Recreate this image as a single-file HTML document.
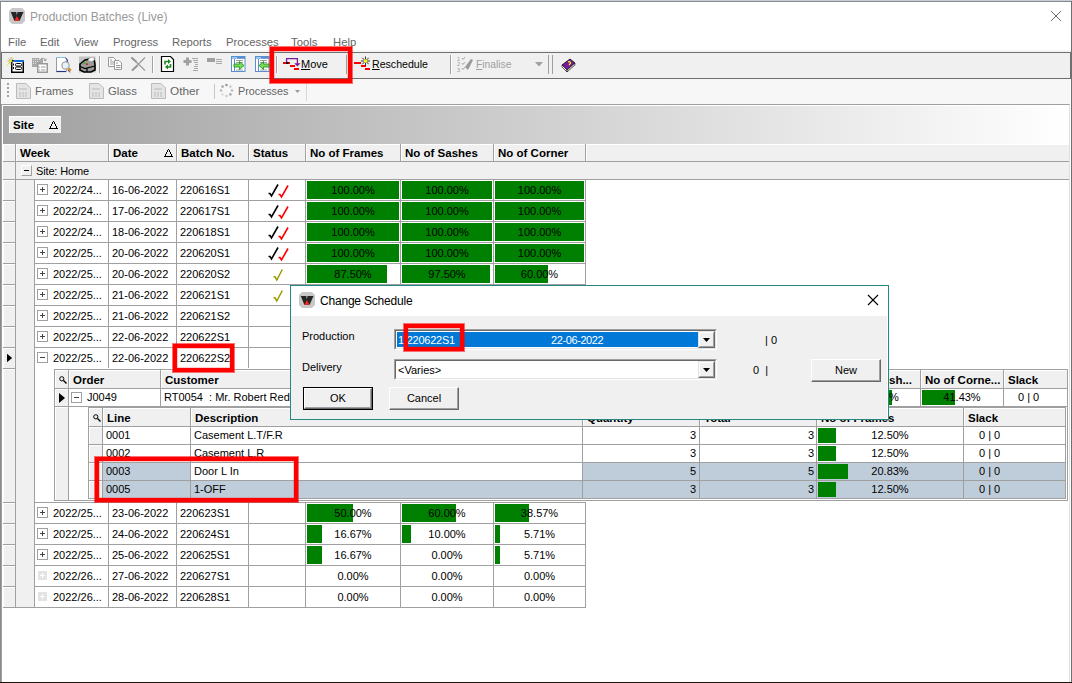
<!DOCTYPE html><html><head><meta charset="utf-8"><style>
*{margin:0;padding:0;box-sizing:border-box}
html,body{width:1072px;height:683px;overflow:hidden;background:#fff;font-family:"Liberation Sans",sans-serif;}
body{position:relative}
div{position:absolute}
.t{white-space:nowrap;font-size:11px;line-height:13px;color:#000}
.h{font-weight:bold;font-size:11.5px}
svg{position:absolute;overflow:visible}
</style></head><body>
<div style="left:0px;top:0px;width:1072px;height:1px;background:#c8ced8"></div>
<div style="left:0px;top:1px;width:1072px;height:1px;background:#8a8a8a"></div>
<div style="left:0px;top:1px;width:1px;height:682px;background:#8a8a8a"></div>
<div style="left:1071px;top:1px;width:1px;height:682px;background:#707070"></div>
<div style="left:0px;top:682px;width:1072px;height:1px;background:#1c140c"></div>
<svg style="left:9px;top:8px" width="16" height="16" viewBox="0 0 16 16"><path d="M3 0H13L16 3V13L13 16H3L0 13V3Z" fill="#c8c8c8"/><path d="M1.8 4H7.3L7.9 7.5L8.5 4H14.6L14 5L10.7 12.7H5.3Z" fill="#262626"/><path d="M7.9 8L10.5 12.8H5.5Z" fill="#f22"/></svg>
<div class="t" style="left:30px;top:10px;font-size:12px;line-height:15px;color:#999">Production Batches (Live)</div>
<svg style="left:1050px;top:10px" width="12" height="12" viewBox="0 0 12 12"><path d="M1 1L11 11M11 1L1 11" stroke="#6a6a6a" stroke-width="1"/></svg>
<div class="t" style="left:8px;top:35px;font-size:11.3px;line-height:15px;color:#666">File</div>
<div class="t" style="left:40px;top:35px;font-size:11.3px;line-height:15px;color:#666">Edit</div>
<div class="t" style="left:74px;top:35px;font-size:11.3px;line-height:15px;color:#666">View</div>
<div class="t" style="left:113px;top:35px;font-size:11.3px;line-height:15px;color:#666">Progress</div>
<div class="t" style="left:172px;top:35px;font-size:11.3px;line-height:15px;color:#666">Reports</div>
<div class="t" style="left:226px;top:35px;font-size:11.3px;line-height:15px;color:#666">Processes</div>
<div class="t" style="left:291px;top:35px;font-size:11.3px;line-height:15px;color:#666">Tools</div>
<div class="t" style="left:333px;top:35px;font-size:11.3px;line-height:15px;color:#666">Help</div>
<div style="left:1px;top:50px;width:1070px;height:2px;background:#f4f4f4"></div>
<div style="left:1px;top:52px;width:1070px;height:27px;background:#f0f0f0;border:1px solid #6e6e6e"></div>
<div style="left:1px;top:79px;width:1069px;height:25px;background:#f7f7f7"></div>
<svg style="left:7px;top:56px" width="17" height="17" viewBox="0 0 17 17"><rect x="4.75" y="4.75" width="11.5" height="11.5" fill="#fff" stroke="#000" stroke-width="1.5"/><rect x="7" y="4" width="10" height="2" fill="#0a6ad8"/><rect x="8.5" y="7.5" width="6" height="2.5" rx="1" fill="none" stroke="#000" stroke-width="1"/><rect x="8.5" y="11" width="6" height="2.5" rx="1" fill="none" stroke="#000" stroke-width="1"/><path d="M6.5 7.5V9.5M6.5 11V13" stroke="#000" stroke-width="1"/><path d="M4 1V9M0.5 5H8M1.5 2.5L6.5 7.5M6.5 2.5L1.5 7.5" stroke="#888" stroke-width="0.6"/><circle cx="4" cy="5" r="1" fill="#ff0"/><circle cx="1.5" cy="4.5" r="0.8" fill="#ee0"/><circle cx="2" cy="7" r="0.8" fill="#ee0"/><circle cx="5" cy="2" r="0.8" fill="#ee0"/><circle cx="0.7" cy="9" r="0.7" fill="#ee0"/></svg>
<svg style="left:31px;top:56px" width="17" height="17" viewBox="0 0 17 17"><path d="M1 2H8L9 3H12V11H1Z" fill="#a8a8a8"/><path d="M2 3.5H9M2 5.5H8M2 7.5H7" stroke="#e8e8e8" stroke-width="0.9" stroke-dasharray="1 1"/><path d="M10 2.5Q13 1.5 14.5 4M13 4.5H15V2.5" stroke="#999" fill="none" stroke-width="1"/><rect x="6.75" y="7.75" width="9.5" height="8.5" fill="#fff" stroke="#999" stroke-width="1.5"/><path d="M8.5 10.5V11.5M8.5 13.5V14.5M10 11H14.5M10 14H14.5" stroke="#999" stroke-width="1.2"/></svg>
<svg style="left:56px;top:56px" width="16" height="17" viewBox="0 0 16 17"><path d="M0.5 1.5H9L10.5 3V15.5H0.5Z" fill="#fff" stroke="#9a9a9a"/><path d="M0.5 1.5H9" stroke="#8ac0e8"/><path d="M0.5 15.5H10" stroke="#223388" stroke-width="1.2"/><path d="M9.5 1.5L11.5 4L12 13" stroke="#2233aa" fill="none" stroke-width="0.9"/><circle cx="9.5" cy="9.5" r="3.6" fill="#e4f2fc" stroke="#a8a8a8" stroke-width="1.3"/><path d="M12.5 12.5L14.5 15" stroke="#e09020" stroke-width="3"/><path d="M12 14L14 16.5" stroke="#2233aa" stroke-width="0.8"/></svg>
<svg style="left:79px;top:56px" width="17" height="17" viewBox="0 0 17 17"><rect x="0" y="0.5" width="16.5" height="16" fill="#c4c4c4"/><path d="M1 8L6 4L11 3H15L16 8V14L12 16H5L1 14Z" fill="#9a9a9a" stroke="#000" stroke-width="1.6"/><path d="M1 10.5L6 12.5L16 10M8 12.5V16" stroke="#000" stroke-width="1.2" fill="none"/><path d="M9 4Q10.5 1 13 1.5Q16 1.5 15.5 4Q13 6 10 5Z" fill="#fff" stroke="#999" stroke-width="0.5"/><rect x="4.5" y="6.5" width="2" height="1.3" fill="#0c0"/><rect x="7" y="7.5" width="2" height="1.3" fill="#e00"/></svg>
<div style="left:99px;top:56px;width:1px;height:17px;background:#a0a0a0"></div><div style="left:100px;top:56px;width:1px;height:17px;background:#fff"></div>
<svg style="left:108px;top:57px" width="15" height="14" viewBox="0 0 15 14"><path d="M0.5 0.5H5.5L7.5 2.5V9.5H0.5Z" fill="#fff" stroke="#999"/><path d="M2 3H4M2 5H6M2 7H6" stroke="#999"/><path d="M6.5 3.5H11L13.5 6V12.5H6.5Z" fill="#fff" stroke="#999"/><path d="M8 6H10M8 8.5H12.5M8 10.5H12.5" stroke="#999"/></svg>
<svg style="left:131px;top:57px" width="15" height="14" viewBox="0 0 15 14"><path d="M0.5 0.5L14 13.5M14 0.5L1 13.5" stroke="#999" stroke-width="1.1"/><path d="M0.5 0.5L5.5 5M1 13.5L6.5 8.5" stroke="#999" stroke-width="2"/></svg>
<div style="left:152px;top:56px;width:1px;height:17px;background:#a0a0a0"></div><div style="left:153px;top:56px;width:1px;height:17px;background:#fff"></div>
<svg style="left:161px;top:56px" width="14" height="16" viewBox="0 0 14 16"><path d="M0.5 0.5H9.5L12.5 3.5V15.5H0.5Z" fill="#fff" stroke="#000" stroke-width="1.2"/><path d="M4 8.5V5.5H7.5" fill="none" stroke="#1a8a1a" stroke-width="1.6"/><path d="M7 3L10 5.5L7 8Z" fill="#1a8a1a"/><path d="M9.5 8V11H6.5" fill="none" stroke="#1a8a1a" stroke-width="1.6"/><path d="M7 8.5L4 11L7 13.5Z" fill="#1a8a1a"/></svg>
<svg style="left:183px;top:57px" width="16" height="15" viewBox="0 0 16 15"><path d="M3 0.5H6V3H8.5V6H6V8.5H3V6H0.5V3H3Z" fill="#a0a0a0"/><path d="M9 1.5H15M10 3.5H15M11 5.5H15M12 7.5H15M11 9.5H15M11 11.5H15M10 13.5H15" stroke="#a8a8a8" stroke-width="1"/></svg>
<svg style="left:207px;top:57px" width="16" height="10" viewBox="0 0 16 10"><rect x="0" y="1" width="8" height="4" fill="#a0a0a0"/><path d="M9 2.5H15M9 4.5H15M9 6.5H15" stroke="#a8a8a8" stroke-width="1"/></svg>
<svg style="left:231px;top:56px" width="16" height="16" viewBox="0 0 16 16"><rect x="0.5" y="0.5" width="13.5" height="15" fill="#fff" stroke="#5a8ed0"/><rect x="1" y="1" width="13" height="1.8" fill="#5a8ed0"/><rect x="1" y="1" width="5" height="1.8" fill="#9ccaf0"/><path d="M3.5 3V15.5" stroke="#5a8ed0"/><path d="M5 4.5H12M5 6.5H12M5 8.5H12M5 14H12" stroke="#888" stroke-width="0.8"/><path d="M3 8H8.5V5.5L13 9.5L8.5 13.5V11H3Z" fill="#7ad85a" stroke="#1e9a1e" stroke-width="0.9"/></svg>
<svg style="left:255px;top:56px" width="16" height="16" viewBox="0 0 16 16"><rect x="0.5" y="0.5" width="13.5" height="15" fill="#fff" stroke="#5a8ed0"/><rect x="1" y="1" width="13" height="1.8" fill="#5a8ed0"/><rect x="1" y="1" width="5" height="1.8" fill="#9ccaf0"/><path d="M3.5 3V15.5" stroke="#5a8ed0"/><path d="M5 4.5H12M5 6.5H12M5 8.5H12M5 14H12" stroke="#888" stroke-width="0.8"/><path d="M14 8H8.5V5.5L4 9.5L8.5 13.5V11H14Z" fill="#7ad85a" stroke="#1e9a1e" stroke-width="0.9"/></svg>
<div style="left:276px;top:56px;width:1px;height:17px;background:#a0a0a0"></div><div style="left:277px;top:56px;width:1px;height:17px;background:#fff"></div>
<svg style="left:283px;top:56px" width="18" height="16" viewBox="0 0 18 16"><rect x="0" y="6" width="7" height="2" fill="#f00"/><rect x="3" y="6" width="2.5" height="2" fill="#000"/><path d="M3.6 6.5V2.6H14.4V8" fill="none" stroke="#7a1a9a" stroke-width="1.3"/><path d="M11.3 7.2H17.5L14.4 10.6Z" fill="#7a1a9a"/><rect x="7" y="9" width="5" height="2" fill="#f00"/><rect x="11" y="12" width="5" height="2" fill="#f00"/></svg>
<div class="t" style="left:301px;top:57px;font-size:11px;line-height:15px;color:#000"><u>M</u>ove</div>
<div style="left:346px;top:55px;width:1px;height:19px;background:#a0a0a0"></div><div style="left:347px;top:55px;width:1px;height:19px;background:#fff"></div>
<svg style="left:354px;top:56px" width="18" height="16" viewBox="0 0 18 16"><rect x="0" y="6" width="7" height="2" fill="#f00"/><rect x="7" y="9" width="5" height="2" fill="#f00"/><rect x="11" y="12" width="5" height="2" fill="#f00"/><path d="M11.5 0.5V9.5M7 5H16M8.3 1.8L14.7 8.2M14.7 1.8L8.3 8.2" stroke="#000" stroke-width="0.8"/><circle cx="11.5" cy="5" r="1.7" fill="#ff0"/></svg>
<div class="t" style="left:372px;top:57px;font-size:10.6px;line-height:15px;color:#000"><u>R</u>eschedule</div>
<div style="left:450px;top:55px;width:1px;height:19px;background:#a0a0a0"></div><div style="left:451px;top:55px;width:1px;height:19px;background:#fff"></div>
<svg style="left:457px;top:56px" width="18" height="16" viewBox="0 0 18 16"><text x="0" y="5" font-size="5.5" fill="#999" font-family="Liberation Sans">1</text><text x="0" y="10" font-size="5.5" fill="#999" font-family="Liberation Sans">2</text><text x="0" y="15.5" font-size="5.5" fill="#999" font-family="Liberation Sans">3</text><path d="M5 2L6 3.5L8 1M5 7L6 8.5L8 6M5 12L6 13.5L8 11" stroke="#999" fill="none" stroke-width="0.8"/><path d="M8 11L14 3L16 4L11 14Z" fill="#999"/></svg>
<div class="t" style="left:476px;top:57px;font-size:10.3px;line-height:15px;color:#a0a0a0"><u>F</u>inalise</div>
<svg style="left:535px;top:62px" width="8" height="5" viewBox="0 0 8 5"><path d="M0 0H8L4 4.5Z" fill="#a0a0a0"/></svg>
<div style="left:548px;top:55px;width:1px;height:19px;background:#a0a0a0"></div>
<div style="left:552px;top:55px;width:1px;height:19px;background:#a0a0a0"></div>
<svg style="left:561px;top:58px" width="15" height="14" viewBox="0 0 15 14"><path d="M1 7L9 1L14 5L6 12Z" fill="#7a1a9a" stroke="#000" stroke-width="0.8"/><path d="M1 7L6 12V14L1 9Z" fill="#fff" stroke="#000" stroke-width="0.6"/><path d="M6 12L14 5V7L6 14Z" fill="#ddd" stroke="#000" stroke-width="0.6"/><path d="M7 4Q9 3 9.5 5Q9 6 8 7" stroke="#ff0" fill="none" stroke-width="1.2"/></svg>
<div style="left:7px;top:83px;width:2px;height:2px;background:#a0a0a0"></div>
<div style="left:7px;top:87px;width:2px;height:2px;background:#a0a0a0"></div>
<div style="left:7px;top:91px;width:2px;height:2px;background:#a0a0a0"></div>
<div style="left:7px;top:95px;width:2px;height:2px;background:#a0a0a0"></div>
<svg style="left:16px;top:83px" width="15" height="16" viewBox="0 0 15 16"><path d="M0.5 0.5H10L14.5 5V15.5H0.5Z" fill="#e4e4e4" stroke="#bbb"/><path d="M3 6H11M4 9V14M7 9V14M10 9V14" stroke="#c8c8c8" stroke-width="1.4"/></svg>
<div class="t" style="left:35px;top:84px;font-size:11.3px;line-height:15px;color:#666">Frames</div>
<svg style="left:89px;top:83px" width="15" height="16" viewBox="0 0 15 16"><path d="M0.5 0.5H10L14.5 5V15.5H0.5Z" fill="#e4e4e4" stroke="#bbb"/><path d="M3 6H11M4 9V14M7 9V14M10 9V14" stroke="#c8c8c8" stroke-width="1.4"/></svg>
<div class="t" style="left:108px;top:84px;font-size:11.3px;line-height:15px;color:#666">Glass</div>
<svg style="left:151px;top:83px" width="15" height="16" viewBox="0 0 15 16"><path d="M0.5 0.5H10L14.5 5V15.5H0.5Z" fill="#e4e4e4" stroke="#bbb"/><path d="M3 6H11M4 9V14M7 9V14M10 9V14" stroke="#c8c8c8" stroke-width="1.4"/></svg>
<div class="t" style="left:170px;top:84px;font-size:11.8px;line-height:15px;color:#666">Other</div>
<div style="left:214px;top:84px;width:1px;height:15px;background:#c8c8c8"></div>
<svg style="left:219px;top:83px" width="15" height="15" viewBox="0 0 15 15"><circle cx="13.0" cy="7.5" r="1.3" fill="#bbb"/><circle cx="11.390635480419599" cy="11.387538496079513" r="1.3" fill="#aaa"/><circle cx="7.504379796909033" cy="12.99999825612509" r="1.3" fill="#ccc"/><circle cx="3.6155609534899713" cy="11.393729997566377" r="1.3" fill="#ddd"/><circle cx="2.0000069754985326" cy="7.508759591040677" r="1.3" fill="#bbb"/><circle cx="3.6031779544424998" cy="3.618662866323378" r="1.3" fill="#aaa"/><circle cx="7.486860620382451" cy="2.0000156948675514" r="1.3" fill="#999"/><circle cx="11.378232759546325" cy="3.6000883775678076" r="1.3" fill="#ccc"/></svg>
<div class="t" style="left:238px;top:84px;font-size:10.8px;line-height:15px;color:#666">Processes</div>
<svg style="left:295px;top:90px" width="5" height="3" viewBox="0 0 5 3"><path d="M0 0H5L2.5 3Z" fill="#999"/></svg>
<div style="left:306px;top:82px;width:1px;height:19px;background:#d8d8d8"></div>
<div style="left:1px;top:104px;width:1069px;height:578px;background:#fff;border:1px solid #a0a0a0;border-right-color:#e0e0e0;border-bottom:none"></div>
<div style="left:2px;top:105px;width:1067px;height:577px;border-left:1px solid #fff;border-top:1px solid #fff"></div>
<div style="left:3px;top:106px;width:1066px;height:38px;background:linear-gradient(to right,#a0a0a0,#ffffff)"></div>
<div style="left:9px;top:116px;width:52px;height:17px;background:#f0f0f0;border-left:1px solid #fff;border-top:1px solid #fff"></div>
<div class="t" style="left:13px;top:119px;font-weight:bold;font-size:11.5px">Site</div>
<svg style="left:49px;top:121px" width="9" height="8" viewBox="0 0 9 8" shape-rendering="crispEdges" fill="#000"><rect x="4" y="0" width="1" height="1"/><rect x="3" y="1" width="1" height="2"/><rect x="5" y="1" width="1" height="2"/><rect x="2" y="3" width="1" height="2"/><rect x="6" y="3" width="1" height="2"/><rect x="1" y="5" width="1" height="2"/><rect x="7" y="5" width="1" height="2"/><rect x="0" y="7" width="9" height="1"/></svg>
<div style="left:3px;top:144px;width:1066px;height:18px;background:#f0f0f0"></div>
<div style="left:3px;top:144px;width:1066px;height:1px;background:#fff"></div>
<div style="left:3px;top:161px;width:1066px;height:1px;background:#a0a0a0"></div>
<div style="left:15px;top:144px;width:1px;height:17px;background:#a0a0a0"></div>
<div style="left:16px;top:145px;width:1px;height:16px;background:#fff"></div>
<div style="left:108px;top:144px;width:1px;height:17px;background:#a0a0a0"></div>
<div style="left:109px;top:145px;width:1px;height:16px;background:#fff"></div>
<div style="left:176px;top:144px;width:1px;height:17px;background:#a0a0a0"></div>
<div style="left:177px;top:145px;width:1px;height:16px;background:#fff"></div>
<div style="left:248px;top:144px;width:1px;height:17px;background:#a0a0a0"></div>
<div style="left:249px;top:145px;width:1px;height:16px;background:#fff"></div>
<div style="left:305px;top:144px;width:1px;height:17px;background:#a0a0a0"></div>
<div style="left:306px;top:145px;width:1px;height:16px;background:#fff"></div>
<div style="left:400px;top:144px;width:1px;height:17px;background:#a0a0a0"></div>
<div style="left:401px;top:145px;width:1px;height:16px;background:#fff"></div>
<div style="left:493px;top:144px;width:1px;height:17px;background:#a0a0a0"></div>
<div style="left:494px;top:145px;width:1px;height:16px;background:#fff"></div>
<div style="left:585px;top:144px;width:1px;height:17px;background:#a0a0a0"></div>
<div style="left:586px;top:145px;width:1px;height:16px;background:#fff"></div>
<div style="left:3px;top:144px;width:1px;height:17px;background:#fff"></div>
<div class="t" style="left:20px;top:147px;font-weight:bold;font-size:11.5px">Week</div>
<div class="t" style="left:113px;top:147px;font-weight:bold;font-size:11.5px">Date</div>
<div class="t" style="left:181px;top:147px;font-weight:bold;font-size:11.5px">Batch No.</div>
<div class="t" style="left:253px;top:147px;font-weight:bold;font-size:11.5px">Status</div>
<div class="t" style="left:310px;top:147px;font-weight:bold;font-size:11.5px">No of Frames</div>
<div class="t" style="left:405px;top:147px;font-weight:bold;font-size:11.5px">No of Sashes</div>
<div class="t" style="left:498px;top:147px;font-weight:bold;font-size:11.5px">No of Corner</div>
<svg style="left:164px;top:149px" width="9" height="8" viewBox="0 0 9 8" shape-rendering="crispEdges" fill="#000"><rect x="4" y="0" width="1" height="1"/><rect x="3" y="1" width="1" height="2"/><rect x="5" y="1" width="1" height="2"/><rect x="2" y="3" width="1" height="2"/><rect x="6" y="3" width="1" height="2"/><rect x="1" y="5" width="1" height="2"/><rect x="7" y="5" width="1" height="2"/><rect x="0" y="7" width="9" height="1"/></svg>
<div style="left:3px;top:162px;width:1066px;height:17px;background:#f0f0f0"></div>
<div style="left:3px;top:179px;width:1066px;height:1px;background:#a0a0a0"></div>
<div style="left:15px;top:162px;width:1px;height:446px;background:#a0a0a0"></div>
<div style="left:21px;top:165px;width:11px;height:11px;background:#f0f0f0;border-top:1px solid #fff;border-left:1px solid #fff;border-right:1px solid #a0a0a0;border-bottom:1px solid #a0a0a0"></div>
<div style="left:24px;top:170px;width:5px;height:1px;background:#000"></div>
<div class="t" style="left:36px;top:165px;letter-spacing:-0.15px">Site: Home</div>
<div style="left:16px;top:180px;width:18px;height:427px;background:#f0f0f0"></div>
<div style="left:34px;top:179px;width:1px;height:428px;background:#a0a0a0"></div>
<div style="left:3px;top:607px;width:31px;height:1px;background:#a0a0a0"></div>
<div style="left:3px;top:180px;width:12px;height:20px;background:#f0f0f0;border-left:1px solid #fff;border-top:1px solid #fff"></div><div style="left:3px;top:200px;width:12px;height:1px;background:#a0a0a0"></div><div style="left:37px;top:184px;width:11px;height:11px;border:1px solid #a0a0a0;background:#fff"></div><div style="left:40px;top:189px;width:5px;height:1px;background:#444"></div><div style="left:42px;top:187px;width:1px;height:5px;background:#444"></div><div class="t" style="left:53px;top:184px;">2022/24...</div><div class="t" style="left:112px;top:184px;">16-06-2022</div><div class="t" style="left:180px;top:184px;">220616S1</div><svg style="left:268px;top:184px" width="11" height="13" viewBox="0 0 11 13"><path d="M0.5 9.5H2L3.5 12L10 0.5" fill="none" stroke="#000" stroke-width="1.6" stroke-linejoin="miter"/></svg><svg style="left:278px;top:185px" width="11" height="13" viewBox="0 0 11 13"><path d="M0.5 9.5H2L3.5 12L10 0.5" fill="none" stroke="#f00" stroke-width="1.6" stroke-linejoin="miter"/></svg><div style="left:307px;top:181px;width:92px;height:18px;background:#008000"></div><div class="t" style="left:306px;top:184px;width:94px;text-align:center;">100.00%</div><div style="left:402px;top:181px;width:90px;height:18px;background:#008000"></div><div class="t" style="left:401px;top:184px;width:92px;text-align:center;">100.00%</div><div style="left:495px;top:181px;width:89px;height:18px;background:#008000"></div><div class="t" style="left:494px;top:184px;width:91px;text-align:center;">100.00%</div><div style="left:108px;top:179px;width:1px;height:21px;background:#a0a0a0"></div><div style="left:176px;top:179px;width:1px;height:21px;background:#a0a0a0"></div><div style="left:248px;top:179px;width:1px;height:21px;background:#a0a0a0"></div><div style="left:305px;top:179px;width:1px;height:21px;background:#a0a0a0"></div><div style="left:400px;top:179px;width:1px;height:21px;background:#a0a0a0"></div><div style="left:493px;top:179px;width:1px;height:21px;background:#a0a0a0"></div><div style="left:585px;top:179px;width:1px;height:21px;background:#a0a0a0"></div><div style="left:34px;top:200px;width:552px;height:1px;background:#a0a0a0"></div>
<div style="left:3px;top:201px;width:12px;height:20px;background:#f0f0f0;border-left:1px solid #fff;border-top:1px solid #fff"></div><div style="left:3px;top:221px;width:12px;height:1px;background:#a0a0a0"></div><div style="left:37px;top:205px;width:11px;height:11px;border:1px solid #a0a0a0;background:#fff"></div><div style="left:40px;top:210px;width:5px;height:1px;background:#444"></div><div style="left:42px;top:208px;width:1px;height:5px;background:#444"></div><div class="t" style="left:53px;top:205px;">2022/24...</div><div class="t" style="left:112px;top:205px;">17-06-2022</div><div class="t" style="left:180px;top:205px;">220617S1</div><svg style="left:268px;top:205px" width="11" height="13" viewBox="0 0 11 13"><path d="M0.5 9.5H2L3.5 12L10 0.5" fill="none" stroke="#000" stroke-width="1.6" stroke-linejoin="miter"/></svg><svg style="left:278px;top:206px" width="11" height="13" viewBox="0 0 11 13"><path d="M0.5 9.5H2L3.5 12L10 0.5" fill="none" stroke="#f00" stroke-width="1.6" stroke-linejoin="miter"/></svg><div style="left:307px;top:202px;width:92px;height:18px;background:#008000"></div><div class="t" style="left:306px;top:205px;width:94px;text-align:center;">100.00%</div><div style="left:402px;top:202px;width:90px;height:18px;background:#008000"></div><div class="t" style="left:401px;top:205px;width:92px;text-align:center;">100.00%</div><div style="left:495px;top:202px;width:89px;height:18px;background:#008000"></div><div class="t" style="left:494px;top:205px;width:91px;text-align:center;">100.00%</div><div style="left:108px;top:200px;width:1px;height:21px;background:#a0a0a0"></div><div style="left:176px;top:200px;width:1px;height:21px;background:#a0a0a0"></div><div style="left:248px;top:200px;width:1px;height:21px;background:#a0a0a0"></div><div style="left:305px;top:200px;width:1px;height:21px;background:#a0a0a0"></div><div style="left:400px;top:200px;width:1px;height:21px;background:#a0a0a0"></div><div style="left:493px;top:200px;width:1px;height:21px;background:#a0a0a0"></div><div style="left:585px;top:200px;width:1px;height:21px;background:#a0a0a0"></div><div style="left:34px;top:221px;width:552px;height:1px;background:#a0a0a0"></div>
<div style="left:3px;top:222px;width:12px;height:20px;background:#f0f0f0;border-left:1px solid #fff;border-top:1px solid #fff"></div><div style="left:3px;top:242px;width:12px;height:1px;background:#a0a0a0"></div><div style="left:37px;top:226px;width:11px;height:11px;border:1px solid #a0a0a0;background:#fff"></div><div style="left:40px;top:231px;width:5px;height:1px;background:#444"></div><div style="left:42px;top:229px;width:1px;height:5px;background:#444"></div><div class="t" style="left:53px;top:226px;">2022/24...</div><div class="t" style="left:112px;top:226px;">18-06-2022</div><div class="t" style="left:180px;top:226px;">220618S1</div><svg style="left:268px;top:226px" width="11" height="13" viewBox="0 0 11 13"><path d="M0.5 9.5H2L3.5 12L10 0.5" fill="none" stroke="#000" stroke-width="1.6" stroke-linejoin="miter"/></svg><svg style="left:278px;top:227px" width="11" height="13" viewBox="0 0 11 13"><path d="M0.5 9.5H2L3.5 12L10 0.5" fill="none" stroke="#f00" stroke-width="1.6" stroke-linejoin="miter"/></svg><div style="left:307px;top:223px;width:92px;height:18px;background:#008000"></div><div class="t" style="left:306px;top:226px;width:94px;text-align:center;">100.00%</div><div style="left:402px;top:223px;width:90px;height:18px;background:#008000"></div><div class="t" style="left:401px;top:226px;width:92px;text-align:center;">100.00%</div><div style="left:495px;top:223px;width:89px;height:18px;background:#008000"></div><div class="t" style="left:494px;top:226px;width:91px;text-align:center;">100.00%</div><div style="left:108px;top:221px;width:1px;height:21px;background:#a0a0a0"></div><div style="left:176px;top:221px;width:1px;height:21px;background:#a0a0a0"></div><div style="left:248px;top:221px;width:1px;height:21px;background:#a0a0a0"></div><div style="left:305px;top:221px;width:1px;height:21px;background:#a0a0a0"></div><div style="left:400px;top:221px;width:1px;height:21px;background:#a0a0a0"></div><div style="left:493px;top:221px;width:1px;height:21px;background:#a0a0a0"></div><div style="left:585px;top:221px;width:1px;height:21px;background:#a0a0a0"></div><div style="left:34px;top:242px;width:552px;height:1px;background:#a0a0a0"></div>
<div style="left:3px;top:243px;width:12px;height:20px;background:#f0f0f0;border-left:1px solid #fff;border-top:1px solid #fff"></div><div style="left:3px;top:263px;width:12px;height:1px;background:#a0a0a0"></div><div style="left:37px;top:247px;width:11px;height:11px;border:1px solid #a0a0a0;background:#fff"></div><div style="left:40px;top:252px;width:5px;height:1px;background:#444"></div><div style="left:42px;top:250px;width:1px;height:5px;background:#444"></div><div class="t" style="left:53px;top:247px;">2022/25...</div><div class="t" style="left:112px;top:247px;">20-06-2022</div><div class="t" style="left:180px;top:247px;">220620S1</div><svg style="left:268px;top:247px" width="11" height="13" viewBox="0 0 11 13"><path d="M0.5 9.5H2L3.5 12L10 0.5" fill="none" stroke="#000" stroke-width="1.6" stroke-linejoin="miter"/></svg><svg style="left:278px;top:248px" width="11" height="13" viewBox="0 0 11 13"><path d="M0.5 9.5H2L3.5 12L10 0.5" fill="none" stroke="#f00" stroke-width="1.6" stroke-linejoin="miter"/></svg><div style="left:307px;top:244px;width:92px;height:18px;background:#008000"></div><div class="t" style="left:306px;top:247px;width:94px;text-align:center;">100.00%</div><div style="left:402px;top:244px;width:90px;height:18px;background:#008000"></div><div class="t" style="left:401px;top:247px;width:92px;text-align:center;">100.00%</div><div style="left:495px;top:244px;width:89px;height:18px;background:#008000"></div><div class="t" style="left:494px;top:247px;width:91px;text-align:center;">100.00%</div><div style="left:108px;top:242px;width:1px;height:21px;background:#a0a0a0"></div><div style="left:176px;top:242px;width:1px;height:21px;background:#a0a0a0"></div><div style="left:248px;top:242px;width:1px;height:21px;background:#a0a0a0"></div><div style="left:305px;top:242px;width:1px;height:21px;background:#a0a0a0"></div><div style="left:400px;top:242px;width:1px;height:21px;background:#a0a0a0"></div><div style="left:493px;top:242px;width:1px;height:21px;background:#a0a0a0"></div><div style="left:585px;top:242px;width:1px;height:21px;background:#a0a0a0"></div><div style="left:34px;top:263px;width:552px;height:1px;background:#a0a0a0"></div>
<div style="left:3px;top:264px;width:12px;height:20px;background:#f0f0f0;border-left:1px solid #fff;border-top:1px solid #fff"></div><div style="left:3px;top:284px;width:12px;height:1px;background:#a0a0a0"></div><div style="left:37px;top:268px;width:11px;height:11px;border:1px solid #a0a0a0;background:#fff"></div><div style="left:40px;top:273px;width:5px;height:1px;background:#444"></div><div style="left:42px;top:271px;width:1px;height:5px;background:#444"></div><div class="t" style="left:53px;top:268px;">2022/25...</div><div class="t" style="left:112px;top:268px;">20-06-2022</div><div class="t" style="left:180px;top:268px;">220620S2</div><svg style="left:273px;top:269px" width="10" height="12" viewBox="0 0 10 12"><path d="M0.5 7.8H2L3.8 11L9.3 0.5" fill="none" stroke="#9a9a00" stroke-width="1.5" stroke-linejoin="miter"/></svg><div style="left:307px;top:265px;width:80px;height:18px;background:#008000"></div><div class="t" style="left:306px;top:268px;width:94px;text-align:center;">87.50%</div><div style="left:402px;top:265px;width:88px;height:18px;background:#008000"></div><div class="t" style="left:401px;top:268px;width:92px;text-align:center;">97.50%</div><div style="left:495px;top:265px;width:53px;height:18px;background:#008000"></div><div class="t" style="left:494px;top:268px;width:91px;text-align:center;">60.00%</div><div style="left:108px;top:263px;width:1px;height:21px;background:#a0a0a0"></div><div style="left:176px;top:263px;width:1px;height:21px;background:#a0a0a0"></div><div style="left:248px;top:263px;width:1px;height:21px;background:#a0a0a0"></div><div style="left:305px;top:263px;width:1px;height:21px;background:#a0a0a0"></div><div style="left:400px;top:263px;width:1px;height:21px;background:#a0a0a0"></div><div style="left:493px;top:263px;width:1px;height:21px;background:#a0a0a0"></div><div style="left:585px;top:263px;width:1px;height:21px;background:#a0a0a0"></div><div style="left:34px;top:284px;width:552px;height:1px;background:#a0a0a0"></div>
<div style="left:3px;top:285px;width:12px;height:20px;background:#f0f0f0;border-left:1px solid #fff;border-top:1px solid #fff"></div><div style="left:3px;top:305px;width:12px;height:1px;background:#a0a0a0"></div><div style="left:37px;top:289px;width:11px;height:11px;border:1px solid #a0a0a0;background:#fff"></div><div style="left:40px;top:294px;width:5px;height:1px;background:#444"></div><div style="left:42px;top:292px;width:1px;height:5px;background:#444"></div><div class="t" style="left:53px;top:289px;">2022/25...</div><div class="t" style="left:112px;top:289px;">21-06-2022</div><div class="t" style="left:180px;top:289px;">220621S1</div><svg style="left:273px;top:290px" width="10" height="12" viewBox="0 0 10 12"><path d="M0.5 7.8H2L3.8 11L9.3 0.5" fill="none" stroke="#9a9a00" stroke-width="1.5" stroke-linejoin="miter"/></svg><div style="left:108px;top:284px;width:1px;height:21px;background:#a0a0a0"></div><div style="left:176px;top:284px;width:1px;height:21px;background:#a0a0a0"></div><div style="left:248px;top:284px;width:1px;height:21px;background:#a0a0a0"></div><div style="left:305px;top:284px;width:1px;height:21px;background:#a0a0a0"></div><div style="left:400px;top:284px;width:1px;height:21px;background:#a0a0a0"></div><div style="left:493px;top:284px;width:1px;height:21px;background:#a0a0a0"></div><div style="left:585px;top:284px;width:1px;height:21px;background:#a0a0a0"></div><div style="left:34px;top:305px;width:552px;height:1px;background:#a0a0a0"></div>
<div style="left:3px;top:306px;width:12px;height:20px;background:#f0f0f0;border-left:1px solid #fff;border-top:1px solid #fff"></div><div style="left:3px;top:326px;width:12px;height:1px;background:#a0a0a0"></div><div style="left:37px;top:310px;width:11px;height:11px;border:1px solid #a0a0a0;background:#fff"></div><div style="left:40px;top:315px;width:5px;height:1px;background:#444"></div><div style="left:42px;top:313px;width:1px;height:5px;background:#444"></div><div class="t" style="left:53px;top:310px;">2022/25...</div><div class="t" style="left:112px;top:310px;">21-06-2022</div><div class="t" style="left:180px;top:310px;">220621S2</div><div style="left:108px;top:305px;width:1px;height:21px;background:#a0a0a0"></div><div style="left:176px;top:305px;width:1px;height:21px;background:#a0a0a0"></div><div style="left:248px;top:305px;width:1px;height:21px;background:#a0a0a0"></div><div style="left:305px;top:305px;width:1px;height:21px;background:#a0a0a0"></div><div style="left:400px;top:305px;width:1px;height:21px;background:#a0a0a0"></div><div style="left:493px;top:305px;width:1px;height:21px;background:#a0a0a0"></div><div style="left:585px;top:305px;width:1px;height:21px;background:#a0a0a0"></div><div style="left:34px;top:326px;width:552px;height:1px;background:#a0a0a0"></div>
<div style="left:3px;top:327px;width:12px;height:20px;background:#f0f0f0;border-left:1px solid #fff;border-top:1px solid #fff"></div><div style="left:3px;top:347px;width:12px;height:1px;background:#a0a0a0"></div><div style="left:37px;top:331px;width:11px;height:11px;border:1px solid #a0a0a0;background:#fff"></div><div style="left:40px;top:336px;width:5px;height:1px;background:#444"></div><div style="left:42px;top:334px;width:1px;height:5px;background:#444"></div><div class="t" style="left:53px;top:331px;">2022/25...</div><div class="t" style="left:112px;top:331px;">22-06-2022</div><div class="t" style="left:180px;top:331px;">220622S1</div><div style="left:108px;top:326px;width:1px;height:21px;background:#a0a0a0"></div><div style="left:176px;top:326px;width:1px;height:21px;background:#a0a0a0"></div><div style="left:248px;top:326px;width:1px;height:21px;background:#a0a0a0"></div><div style="left:305px;top:326px;width:1px;height:21px;background:#a0a0a0"></div><div style="left:400px;top:326px;width:1px;height:21px;background:#a0a0a0"></div><div style="left:493px;top:326px;width:1px;height:21px;background:#a0a0a0"></div><div style="left:585px;top:326px;width:1px;height:21px;background:#a0a0a0"></div><div style="left:34px;top:347px;width:552px;height:1px;background:#a0a0a0"></div>
<div style="left:3px;top:348px;width:12px;height:20px;background:#f0f0f0;border-left:1px solid #fff;border-top:1px solid #fff"></div><div style="left:3px;top:368px;width:12px;height:1px;background:#a0a0a0"></div><div style="left:37px;top:352px;width:11px;height:11px;border:1px solid #a0a0a0;background:#fff"></div><div style="left:40px;top:357px;width:5px;height:1px;background:#444"></div><div class="t" style="left:53px;top:352px;">2022/25...</div><div class="t" style="left:112px;top:352px;">22-06-2022</div><div class="t" style="left:180px;top:352px;">220622S2</div><div style="left:108px;top:347px;width:1px;height:21px;background:#a0a0a0"></div><div style="left:176px;top:347px;width:1px;height:21px;background:#a0a0a0"></div><div style="left:248px;top:347px;width:1px;height:21px;background:#a0a0a0"></div><div style="left:305px;top:347px;width:1px;height:21px;background:#a0a0a0"></div><div style="left:400px;top:347px;width:1px;height:21px;background:#a0a0a0"></div><div style="left:493px;top:347px;width:1px;height:21px;background:#a0a0a0"></div><div style="left:585px;top:347px;width:1px;height:21px;background:#a0a0a0"></div>
<svg style="left:7px;top:353px" width="6" height="10" viewBox="0 0 7 10"><path d="M0 0L6 5L0 10Z" fill="#000"/></svg>
<div style="left:3px;top:369px;width:12px;height:133px;background:#f0f0f0;border-left:1px solid #fff;border-top:1px solid #fff"></div><div style="left:3px;top:502px;width:12px;height:1px;background:#a0a0a0"></div>
<div style="left:34px;top:502px;width:552px;height:1px;background:#a0a0a0"></div>
<div style="left:3px;top:503px;width:12px;height:20px;background:#f0f0f0;border-left:1px solid #fff;border-top:1px solid #fff"></div><div style="left:3px;top:523px;width:12px;height:1px;background:#a0a0a0"></div><div style="left:37px;top:507px;width:11px;height:11px;border:1px solid #a0a0a0;background:#fff"></div><div style="left:40px;top:512px;width:5px;height:1px;background:#444"></div><div style="left:42px;top:510px;width:1px;height:5px;background:#444"></div><div class="t" style="left:53px;top:507px;">2022/25...</div><div class="t" style="left:112px;top:507px;">23-06-2022</div><div class="t" style="left:180px;top:507px;">220623S1</div><div style="left:307px;top:504px;width:46px;height:18px;background:#008000"></div><div class="t" style="left:306px;top:507px;width:94px;text-align:center;">50.00%</div><div style="left:402px;top:504px;width:54px;height:18px;background:#008000"></div><div class="t" style="left:401px;top:507px;width:92px;text-align:center;">60.00%</div><div style="left:495px;top:504px;width:34px;height:18px;background:#008000"></div><div class="t" style="left:494px;top:507px;width:91px;text-align:center;">38.57%</div><div style="left:108px;top:502px;width:1px;height:21px;background:#a0a0a0"></div><div style="left:176px;top:502px;width:1px;height:21px;background:#a0a0a0"></div><div style="left:248px;top:502px;width:1px;height:21px;background:#a0a0a0"></div><div style="left:305px;top:502px;width:1px;height:21px;background:#a0a0a0"></div><div style="left:400px;top:502px;width:1px;height:21px;background:#a0a0a0"></div><div style="left:493px;top:502px;width:1px;height:21px;background:#a0a0a0"></div><div style="left:585px;top:502px;width:1px;height:21px;background:#a0a0a0"></div><div style="left:34px;top:523px;width:552px;height:1px;background:#a0a0a0"></div>
<div style="left:3px;top:524px;width:12px;height:20px;background:#f0f0f0;border-left:1px solid #fff;border-top:1px solid #fff"></div><div style="left:3px;top:544px;width:12px;height:1px;background:#a0a0a0"></div><div style="left:37px;top:528px;width:11px;height:11px;border:1px solid #a0a0a0;background:#fff"></div><div style="left:40px;top:533px;width:5px;height:1px;background:#444"></div><div style="left:42px;top:531px;width:1px;height:5px;background:#444"></div><div class="t" style="left:53px;top:528px;">2022/25...</div><div class="t" style="left:112px;top:528px;">24-06-2022</div><div class="t" style="left:180px;top:528px;">220624S1</div><div style="left:307px;top:525px;width:15px;height:18px;background:#008000"></div><div class="t" style="left:306px;top:528px;width:94px;text-align:center;">16.67%</div><div style="left:402px;top:525px;width:9px;height:18px;background:#008000"></div><div class="t" style="left:401px;top:528px;width:92px;text-align:center;">10.00%</div><div style="left:495px;top:525px;width:5px;height:18px;background:#008000"></div><div class="t" style="left:494px;top:528px;width:91px;text-align:center;">5.71%</div><div style="left:108px;top:523px;width:1px;height:21px;background:#a0a0a0"></div><div style="left:176px;top:523px;width:1px;height:21px;background:#a0a0a0"></div><div style="left:248px;top:523px;width:1px;height:21px;background:#a0a0a0"></div><div style="left:305px;top:523px;width:1px;height:21px;background:#a0a0a0"></div><div style="left:400px;top:523px;width:1px;height:21px;background:#a0a0a0"></div><div style="left:493px;top:523px;width:1px;height:21px;background:#a0a0a0"></div><div style="left:585px;top:523px;width:1px;height:21px;background:#a0a0a0"></div><div style="left:34px;top:544px;width:552px;height:1px;background:#a0a0a0"></div>
<div style="left:3px;top:545px;width:12px;height:20px;background:#f0f0f0;border-left:1px solid #fff;border-top:1px solid #fff"></div><div style="left:3px;top:565px;width:12px;height:1px;background:#a0a0a0"></div><div style="left:37px;top:549px;width:11px;height:11px;border:1px solid #a0a0a0;background:#fff"></div><div style="left:40px;top:554px;width:5px;height:1px;background:#444"></div><div style="left:42px;top:552px;width:1px;height:5px;background:#444"></div><div class="t" style="left:53px;top:549px;">2022/25...</div><div class="t" style="left:112px;top:549px;">25-06-2022</div><div class="t" style="left:180px;top:549px;">220625S1</div><div style="left:307px;top:546px;width:15px;height:18px;background:#008000"></div><div class="t" style="left:306px;top:549px;width:94px;text-align:center;">16.67%</div><div class="t" style="left:401px;top:549px;width:92px;text-align:center;">0.00%</div><div style="left:495px;top:546px;width:5px;height:18px;background:#008000"></div><div class="t" style="left:494px;top:549px;width:91px;text-align:center;">5.71%</div><div style="left:108px;top:544px;width:1px;height:21px;background:#a0a0a0"></div><div style="left:176px;top:544px;width:1px;height:21px;background:#a0a0a0"></div><div style="left:248px;top:544px;width:1px;height:21px;background:#a0a0a0"></div><div style="left:305px;top:544px;width:1px;height:21px;background:#a0a0a0"></div><div style="left:400px;top:544px;width:1px;height:21px;background:#a0a0a0"></div><div style="left:493px;top:544px;width:1px;height:21px;background:#a0a0a0"></div><div style="left:585px;top:544px;width:1px;height:21px;background:#a0a0a0"></div><div style="left:34px;top:565px;width:552px;height:1px;background:#a0a0a0"></div>
<div style="left:3px;top:566px;width:12px;height:20px;background:#f0f0f0;border-left:1px solid #fff;border-top:1px solid #fff"></div><div style="left:3px;top:586px;width:12px;height:1px;background:#a0a0a0"></div><div style="left:38px;top:571px;width:9px;height:9px;background:#e3e3e3"></div><div style="left:40px;top:575px;width:5px;height:1px;background:#fff"></div><div style="left:42px;top:573px;width:1px;height:5px;background:#fff"></div><div class="t" style="left:53px;top:570px;">2022/26...</div><div class="t" style="left:112px;top:570px;">27-06-2022</div><div class="t" style="left:180px;top:570px;">220627S1</div><div class="t" style="left:306px;top:570px;width:94px;text-align:center;">0.00%</div><div class="t" style="left:401px;top:570px;width:92px;text-align:center;">0.00%</div><div class="t" style="left:494px;top:570px;width:91px;text-align:center;">0.00%</div><div style="left:108px;top:565px;width:1px;height:21px;background:#a0a0a0"></div><div style="left:176px;top:565px;width:1px;height:21px;background:#a0a0a0"></div><div style="left:248px;top:565px;width:1px;height:21px;background:#a0a0a0"></div><div style="left:305px;top:565px;width:1px;height:21px;background:#a0a0a0"></div><div style="left:400px;top:565px;width:1px;height:21px;background:#a0a0a0"></div><div style="left:493px;top:565px;width:1px;height:21px;background:#a0a0a0"></div><div style="left:585px;top:565px;width:1px;height:21px;background:#a0a0a0"></div><div style="left:34px;top:586px;width:552px;height:1px;background:#a0a0a0"></div>
<div style="left:3px;top:587px;width:12px;height:20px;background:#f0f0f0;border-left:1px solid #fff;border-top:1px solid #fff"></div><div style="left:3px;top:607px;width:12px;height:1px;background:#a0a0a0"></div><div style="left:38px;top:592px;width:9px;height:9px;background:#e3e3e3"></div><div style="left:40px;top:596px;width:5px;height:1px;background:#fff"></div><div style="left:42px;top:594px;width:1px;height:5px;background:#fff"></div><div class="t" style="left:53px;top:591px;">2022/26...</div><div class="t" style="left:112px;top:591px;">28-06-2022</div><div class="t" style="left:180px;top:591px;">220628S1</div><div class="t" style="left:306px;top:591px;width:94px;text-align:center;">0.00%</div><div class="t" style="left:401px;top:591px;width:92px;text-align:center;">0.00%</div><div class="t" style="left:494px;top:591px;width:91px;text-align:center;">0.00%</div><div style="left:108px;top:586px;width:1px;height:21px;background:#a0a0a0"></div><div style="left:176px;top:586px;width:1px;height:21px;background:#a0a0a0"></div><div style="left:248px;top:586px;width:1px;height:21px;background:#a0a0a0"></div><div style="left:305px;top:586px;width:1px;height:21px;background:#a0a0a0"></div><div style="left:400px;top:586px;width:1px;height:21px;background:#a0a0a0"></div><div style="left:493px;top:586px;width:1px;height:21px;background:#a0a0a0"></div><div style="left:585px;top:586px;width:1px;height:21px;background:#a0a0a0"></div><div style="left:34px;top:607px;width:552px;height:1px;background:#a0a0a0"></div>
<div style="left:54px;top:369px;width:1014px;height:132px;background:#fff;border:1px solid #a0a0a0"></div>
<div style="left:55px;top:370px;width:1012px;height:18px;background:#f0f0f0"></div>
<div style="left:55px;top:370px;width:1012px;height:1px;background:#fff"></div>
<div style="left:55px;top:388px;width:1012px;height:1px;background:#a0a0a0"></div>
<div style="left:68px;top:370px;width:1px;height:18px;background:#a0a0a0"></div>
<div style="left:69px;top:371px;width:1px;height:17px;background:#fff"></div>
<div style="left:160px;top:370px;width:1px;height:18px;background:#a0a0a0"></div>
<div style="left:161px;top:371px;width:1px;height:17px;background:#fff"></div>
<div style="left:920px;top:370px;width:1px;height:18px;background:#a0a0a0"></div>
<div style="left:921px;top:371px;width:1px;height:17px;background:#fff"></div>
<div style="left:1003px;top:370px;width:1px;height:18px;background:#a0a0a0"></div>
<div style="left:1004px;top:371px;width:1px;height:17px;background:#fff"></div>
<div style="left:55px;top:370px;width:1px;height:18px;background:#fff"></div>
<svg style="left:59px;top:376px" width="8" height="8" viewBox="0 0 8 8"><circle cx="2.8" cy="2.8" r="2.1" fill="none" stroke="#000" stroke-width="1"/><path d="M4.5 4.5L7.5 7.5" stroke="#000" stroke-width="1.4"/></svg>
<div class="t" style="left:73px;top:374px;font-weight:bold;font-size:11.5px">Order</div>
<div class="t" style="left:165px;top:374px;font-weight:bold;font-size:11.5px">Customer</div>
<div class="t" style="left:889px;top:374px;font-weight:bold;font-size:11.5px">sh...</div>
<div class="t" style="left:925px;top:374px;font-weight:bold;font-size:11.5px">No of Corne...</div>
<div class="t" style="left:1008px;top:374px;font-weight:bold;font-size:11.5px">Slack</div>
<div style="left:55px;top:389px;width:13px;height:18px;background:#f0f0f0;border-left:1px solid #fff;border-top:1px solid #fff"></div>
<div style="left:55px;top:406px;width:13px;height:1px;background:#a0a0a0"></div>
<svg style="left:59px;top:393px" width="7" height="10" viewBox="0 0 7 10"><path d="M0 0L6 5L0 10Z" fill="#000"/></svg>
<div style="left:68px;top:388px;width:1px;height:112px;background:#a0a0a0"></div>
<div style="left:71px;top:392px;width:11px;height:11px;border:1px solid #a0a0a0;background:#fff"></div><div style="left:74px;top:397px;width:5px;height:1px;background:#444"></div>
<div class="t" style="left:87px;top:391px;">J0049</div>
<div style="left:160px;top:388px;width:1px;height:19px;background:#a0a0a0"></div>
<div class="t" style="left:164px;top:391px;">RT0054 &nbsp;: Mr. Robert Red.</div>
<div style="left:920px;top:388px;width:1px;height:19px;background:#a0a0a0"></div>
<div style="left:1003px;top:388px;width:1px;height:19px;background:#a0a0a0"></div>
<div style="left:68px;top:406px;width:999px;height:1px;background:#a0a0a0"></div>
<div style="left:870px;top:390px;width:22px;height:15px;background:#008000"></div>
<div class="t" style="left:889px;top:391px;">%</div>
<div style="left:922px;top:390px;width:33px;height:15px;background:#008000"></div>
<div class="t" style="left:921px;top:391px;width:82px;text-align:center;">41.43%</div>
<div class="t" style="left:1018px;top:391px;">0 | 0</div>
<div style="left:55px;top:407px;width:13px;height:93px;background:#f0f0f0;border-left:1px solid #fff;border-top:1px solid #fff"></div>
<div style="left:88px;top:407px;width:978px;height:92px;background:#fff;border:1px solid #a0a0a0"></div>
<div style="left:89px;top:408px;width:976px;height:18px;background:#f0f0f0"></div>
<div style="left:89px;top:408px;width:976px;height:1px;background:#fff"></div>
<div style="left:89px;top:426px;width:976px;height:1px;background:#a0a0a0"></div>
<div style="left:102px;top:408px;width:1px;height:18px;background:#a0a0a0"></div>
<div style="left:103px;top:409px;width:1px;height:17px;background:#fff"></div>
<div style="left:190px;top:408px;width:1px;height:18px;background:#a0a0a0"></div>
<div style="left:191px;top:409px;width:1px;height:17px;background:#fff"></div>
<div style="left:582px;top:408px;width:1px;height:18px;background:#a0a0a0"></div>
<div style="left:583px;top:409px;width:1px;height:17px;background:#fff"></div>
<div style="left:699px;top:408px;width:1px;height:18px;background:#a0a0a0"></div>
<div style="left:700px;top:409px;width:1px;height:17px;background:#fff"></div>
<div style="left:816px;top:408px;width:1px;height:18px;background:#a0a0a0"></div>
<div style="left:817px;top:409px;width:1px;height:17px;background:#fff"></div>
<div style="left:963px;top:408px;width:1px;height:18px;background:#a0a0a0"></div>
<div style="left:964px;top:409px;width:1px;height:17px;background:#fff"></div>
<div style="left:89px;top:408px;width:1px;height:18px;background:#fff"></div>
<svg style="left:93px;top:414px" width="8" height="8" viewBox="0 0 8 8"><circle cx="2.8" cy="2.8" r="2.1" fill="none" stroke="#000" stroke-width="1"/><path d="M4.5 4.5L7.5 7.5" stroke="#000" stroke-width="1.4"/></svg>
<div class="t" style="left:107px;top:412px;font-weight:bold;font-size:11.5px">Line</div>
<div class="t" style="left:195px;top:412px;font-weight:bold;font-size:11.5px">Description</div>
<div class="t" style="left:587px;top:412px;font-weight:bold;font-size:11.5px">Quantity</div>
<div class="t" style="left:704px;top:412px;font-weight:bold;font-size:11.5px">Total</div>
<div class="t" style="left:821px;top:412px;font-weight:bold;font-size:11.5px">No of Frames</div>
<div class="t" style="left:968px;top:412px;font-weight:bold;font-size:11.5px">Slack</div>
<div style="left:89px;top:427px;width:13px;height:17px;background:#f0f0f0;border-left:1px solid #fff;border-top:1px solid #fff"></div>
<div style="left:89px;top:444px;width:976px;height:1px;background:#a0a0a0"></div>
<div style="left:102px;top:427px;width:1px;height:17px;background:#a0a0a0"></div>
<div style="left:190px;top:427px;width:1px;height:17px;background:#a0a0a0"></div>
<div style="left:582px;top:427px;width:1px;height:17px;background:#a0a0a0"></div>
<div style="left:699px;top:427px;width:1px;height:17px;background:#a0a0a0"></div>
<div style="left:816px;top:427px;width:1px;height:17px;background:#a0a0a0"></div>
<div style="left:963px;top:427px;width:1px;height:17px;background:#a0a0a0"></div>
<div class="t" style="left:106px;top:429px;">0001</div>
<div class="t" style="left:194px;top:429px;">Casement L.T/F.R</div>
<div class="t" style="left:583px;top:429px;width:113px;text-align:right;">3</div>
<div class="t" style="left:700px;top:429px;width:114px;text-align:right;">3</div>
<div style="left:818px;top:428px;width:18px;height:15px;background:#008000"></div>
<div class="t" style="left:817px;top:429px;width:146px;text-align:center;">12.50%</div>
<div class="t" style="left:979px;top:429px;">0 | 0</div>
<div style="left:89px;top:445px;width:13px;height:17px;background:#f0f0f0;border-left:1px solid #fff;border-top:1px solid #fff"></div>
<div style="left:89px;top:462px;width:976px;height:1px;background:#a0a0a0"></div>
<div style="left:102px;top:445px;width:1px;height:17px;background:#a0a0a0"></div>
<div style="left:190px;top:445px;width:1px;height:17px;background:#a0a0a0"></div>
<div style="left:582px;top:445px;width:1px;height:17px;background:#a0a0a0"></div>
<div style="left:699px;top:445px;width:1px;height:17px;background:#a0a0a0"></div>
<div style="left:816px;top:445px;width:1px;height:17px;background:#a0a0a0"></div>
<div style="left:963px;top:445px;width:1px;height:17px;background:#a0a0a0"></div>
<div class="t" style="left:106px;top:447px;">0002</div>
<div class="t" style="left:194px;top:447px;">Casement L.R</div>
<div class="t" style="left:583px;top:447px;width:113px;text-align:right;">3</div>
<div class="t" style="left:700px;top:447px;width:114px;text-align:right;">3</div>
<div style="left:818px;top:446px;width:18px;height:15px;background:#008000"></div>
<div class="t" style="left:817px;top:447px;width:146px;text-align:center;">12.50%</div>
<div class="t" style="left:979px;top:447px;">0 | 0</div>
<div style="left:103px;top:463px;width:962px;height:17px;background:#bfcddb"></div>
<div style="left:191px;top:463px;width:391px;height:17px;background:#fff"></div>
<div style="left:89px;top:463px;width:13px;height:17px;background:#f0f0f0;border-left:1px solid #fff;border-top:1px solid #fff"></div>
<div style="left:89px;top:480px;width:976px;height:1px;background:#a0a0a0"></div>
<div style="left:102px;top:463px;width:1px;height:17px;background:#a0a0a0"></div>
<div style="left:190px;top:463px;width:1px;height:17px;background:#a0a0a0"></div>
<div style="left:582px;top:463px;width:1px;height:17px;background:#a0a0a0"></div>
<div style="left:699px;top:463px;width:1px;height:17px;background:#a0a0a0"></div>
<div style="left:816px;top:463px;width:1px;height:17px;background:#a0a0a0"></div>
<div style="left:963px;top:463px;width:1px;height:17px;background:#a0a0a0"></div>
<div class="t" style="left:106px;top:465px;">0003</div>
<div class="t" style="left:194px;top:465px;">Door L In</div>
<div class="t" style="left:583px;top:465px;width:113px;text-align:right;">5</div>
<div class="t" style="left:700px;top:465px;width:114px;text-align:right;">5</div>
<div style="left:818px;top:464px;width:30px;height:15px;background:#008000"></div>
<div class="t" style="left:817px;top:465px;width:146px;text-align:center;">20.83%</div>
<div class="t" style="left:979px;top:465px;">0 | 0</div>
<div style="left:103px;top:481px;width:962px;height:17px;background:#bfcddb"></div>
<div style="left:89px;top:481px;width:13px;height:17px;background:#f0f0f0;border-left:1px solid #fff;border-top:1px solid #fff"></div>
<div style="left:89px;top:498px;width:976px;height:1px;background:#a0a0a0"></div>
<div style="left:102px;top:481px;width:1px;height:17px;background:#a0a0a0"></div>
<div style="left:190px;top:481px;width:1px;height:17px;background:#a0a0a0"></div>
<div style="left:582px;top:481px;width:1px;height:17px;background:#a0a0a0"></div>
<div style="left:699px;top:481px;width:1px;height:17px;background:#a0a0a0"></div>
<div style="left:816px;top:481px;width:1px;height:17px;background:#a0a0a0"></div>
<div style="left:963px;top:481px;width:1px;height:17px;background:#a0a0a0"></div>
<div class="t" style="left:106px;top:483px;">0005</div>
<div class="t" style="left:194px;top:483px;">1-OFF</div>
<div class="t" style="left:583px;top:483px;width:113px;text-align:right;">3</div>
<div class="t" style="left:700px;top:483px;width:114px;text-align:right;">3</div>
<div style="left:818px;top:482px;width:18px;height:15px;background:#008000"></div>
<div class="t" style="left:817px;top:483px;width:146px;text-align:center;">12.50%</div>
<div class="t" style="left:979px;top:483px;">0 | 0</div>
<div style="left:290px;top:285px;width:599px;height:135px;background:#fff;border:1px solid #23887f"></div>
<div style="left:291px;top:316px;width:596px;height:103px;background:#f0f0f0"></div>
<svg style="left:299px;top:292px" width="16" height="16" viewBox="0 0 16 16"><path d="M3 0H13L16 3V13L13 16H3L0 13V3Z" fill="#c8c8c8"/><path d="M1.8 4H7.3L7.9 7.5L8.5 4H14.6L14 5L10.7 12.7H5.3Z" fill="#262626"/><path d="M7.9 8L10.5 12.8H5.5Z" fill="#f22"/></svg>
<div class="t" style="left:320px;top:294px;font-size:12px;line-height:15px;color:#000;letter-spacing:-0.2px">Change Schedule</div>
<svg style="left:867px;top:294px" width="12" height="12" viewBox="0 0 12 12"><path d="M1 1L11 11M11 1L1 11" stroke="#000" stroke-width="1.1"/></svg>
<div class="t" style="left:302px;top:329px;font-size:11px;line-height:14px">Production</div>
<div class="t" style="left:302px;top:360px;font-size:11px;line-height:14px">Delivery</div>
<div style="left:394px;top:329px;width:323px;height:21px;background:#fff;border-top:1px solid #a0a0a0;border-left:1px solid #a0a0a0;border-bottom:1px solid #fff;border-right:1px solid #fff"></div><div style="left:395px;top:330px;width:321px;height:19px;border-top:1px solid #696969;border-left:1px solid #696969;border-bottom:1px solid #e3e3e3;border-right:1px solid #e3e3e3"></div><div style="left:698px;top:331px;width:17px;height:17px;background:#f0f0f0;border-top:1px solid #e3e3e3;border-left:1px solid #e3e3e3;border-right:1px solid #696969;border-bottom:1px solid #696969"></div><div style="left:699px;top:332px;width:15px;height:15px;border-top:1px solid #fff;border-left:1px solid #fff;border-right:1px solid #a0a0a0;border-bottom:1px solid #a0a0a0"></div><svg style="left:703px;top:338px" width="7" height="4" viewBox="0 0 7 4"><path d="M0 0H7L3.5 4Z" fill="#000"/></svg>
<div style="left:397px;top:332px;width:301px;height:15px;background:#0078d7"></div>
<div class="t" style="left:398px;top:333px;font-size:11px;line-height:14px;color:#fff;letter-spacing:-0.25px">1/220622S1</div>
<div class="t" style="left:551px;top:333px;font-size:11px;line-height:14px;color:#fff;letter-spacing:-0.4px">22-06-2022</div>
<div style="left:394px;top:359px;width:323px;height:21px;background:#fff;border-top:1px solid #a0a0a0;border-left:1px solid #a0a0a0;border-bottom:1px solid #fff;border-right:1px solid #fff"></div><div style="left:395px;top:360px;width:321px;height:19px;border-top:1px solid #696969;border-left:1px solid #696969;border-bottom:1px solid #e3e3e3;border-right:1px solid #e3e3e3"></div><div style="left:698px;top:361px;width:17px;height:17px;background:#f0f0f0;border-top:1px solid #e3e3e3;border-left:1px solid #e3e3e3;border-right:1px solid #696969;border-bottom:1px solid #696969"></div><div style="left:699px;top:362px;width:15px;height:15px;border-top:1px solid #fff;border-left:1px solid #fff;border-right:1px solid #a0a0a0;border-bottom:1px solid #a0a0a0"></div><svg style="left:703px;top:368px" width="7" height="4" viewBox="0 0 7 4"><path d="M0 0H7L3.5 4Z" fill="#000"/></svg>
<div class="t" style="left:398px;top:363px;font-size:11px;line-height:14px">&lt;Varies&gt;</div>
<div class="t" style="left:765px;top:333px;font-size:11px;line-height:14px">| 0</div>
<div class="t" style="left:753px;top:363px;font-size:11px;line-height:14px">0 &nbsp;|</div>
<div style="left:303px;top:387px;width:70px;height:23px;border:1px solid #000"></div><div style="left:304px;top:388px;width:68px;height:21px;background:#f0f0f0;border-top:1px solid #fff;border-left:1px solid #fff;border-right:1px solid #696969;border-bottom:1px solid #696969"></div><div style="left:305px;top:389px;width:66px;height:19px;border-right:1px solid #a0a0a0;border-bottom:1px solid #a0a0a0"></div><div class="t" style="left:304px;top:391px;width:68px;text-align:center;font-size:11px;line-height:14px">OK</div>
<div style="left:389px;top:387px;width:70px;height:23px;background:#f0f0f0;border-top:1px solid #fff;border-left:1px solid #fff;border-right:1px solid #696969;border-bottom:1px solid #696969"></div><div style="left:390px;top:388px;width:68px;height:21px;border-right:1px solid #a0a0a0;border-bottom:1px solid #a0a0a0"></div><div class="t" style="left:389px;top:391px;width:70px;text-align:center;font-size:11px;line-height:14px">Cancel</div>
<div style="left:811px;top:359px;width:70px;height:23px;background:#f0f0f0;border-top:1px solid #fff;border-left:1px solid #fff;border-right:1px solid #696969;border-bottom:1px solid #696969"></div><div style="left:812px;top:360px;width:68px;height:21px;border-right:1px solid #a0a0a0;border-bottom:1px solid #a0a0a0"></div><div class="t" style="left:811px;top:363px;width:70px;text-align:center;font-size:11px;line-height:14px">New</div>
<div style="left:270px;top:47px;width:82px;height:36px;border:4px solid #ff0000;box-shadow:0 0 0 1px rgba(255,0,0,0.55),inset 0 0 0 0.5px rgba(255,0,0,0.4)"></div>
<div style="left:173px;top:344px;width:61px;height:28px;border:4px solid #ff0000;box-shadow:0 0 0 1px rgba(255,0,0,0.55),inset 0 0 0 0.5px rgba(255,0,0,0.4)"></div>
<div style="left:404px;top:324px;width:60px;height:27px;border:4px solid #ff0000;box-shadow:0 0 0 1px rgba(255,0,0,0.55),inset 0 0 0 0.5px rgba(255,0,0,0.4)"></div>
<div style="left:95px;top:457px;width:203px;height:45px;border:4px solid #ff0000;box-shadow:0 0 0 1px rgba(255,0,0,0.55),inset 0 0 0 0.5px rgba(255,0,0,0.4)"></div>
</body></html>
